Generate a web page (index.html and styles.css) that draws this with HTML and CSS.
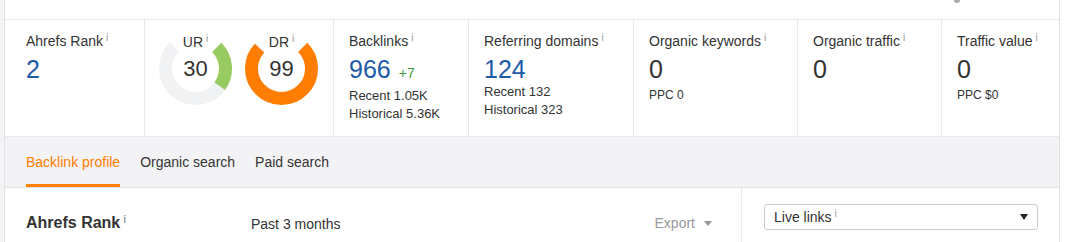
FILE: index.html
```html
<!DOCTYPE html>
<html lang="en">
<head>
  <meta charset="UTF-8" />
  <meta name="viewport" content="width=device-width, initial-scale=1.0"/>
  <title>Site Explorer - Overview</title>
  <link rel="stylesheet" href="styles.css">
</head>
<body>
<div class="page">
  <div class="gutter"></div>
  <div class="main">
    <div class="topbar"><span class="top-mark"></span></div>

    <div class="stats">
      <div class="cell first">
        <div class="label">Ahrefs Rank<span class="info">i</span></div>
        <div class="num">2</div>
      </div>
      <div class="cell gauges">
        <div class="gauge">
          <svg viewBox="0 0 73 73" width="73" height="73">
            <circle class="track" cx="36.5" cy="36.5" r="30" stroke-dasharray="141.4 188.5" transform="rotate(-45 36.5 36.5)"/>
            <circle class="ur-arc" cx="36.5" cy="36.5" r="30" stroke-dasharray="42.4 188.5" transform="rotate(-45 36.5 36.5)"/>
          </svg>
          <div class="gauge-label">UR<span class="info">i</span></div>
          <div class="gauge-num">30</div>
        </div>
        <div class="gauge">
          <svg viewBox="0 0 73 73" width="73" height="73">
            <circle class="track" cx="36.5" cy="36.5" r="30" stroke-dasharray="141.4 188.5" transform="rotate(-45 36.5 36.5)"/>
            <circle class="dr-arc" cx="36.5" cy="36.5" r="30" stroke-dasharray="140 188.5" transform="rotate(-45 36.5 36.5)"/>
          </svg>
          <div class="gauge-label">DR<span class="info">i</span></div>
          <div class="gauge-num">99</div>
        </div>
      </div>
      <div class="cell c3">
        <div class="label">Backlinks<span class="info">i</span></div>
        <div class="num">966<span class="delta">+7</span></div>
        <div class="sub">Recent 1.05K</div>
        <div class="sub">Historical 5.36K</div>
      </div>
      <div class="cell c4">
        <div class="label">Referring domains<span class="info">i</span></div>
        <div class="num">124</div>
        <div class="sub">Recent 132</div>
        <div class="sub">Historical 323</div>
      </div>
      <div class="cell c5">
        <div class="label">Organic keywords<span class="info">i</span></div>
        <div class="num plain">0</div>
        <div class="sub small">PPC 0</div>
      </div>
      <div class="cell c6">
        <div class="label">Organic traffic<span class="info">i</span></div>
        <div class="num plain">0</div>
      </div>
      <div class="cell c7">
        <div class="label">Traffic value<span class="info">i</span></div>
        <div class="num plain">0</div>
        <div class="sub small">PPC $0</div>
      </div>
    </div>

    <div class="tabs">
      <div class="tab active">Backlink profile</div>
      <div class="tab">Organic search</div>
      <div class="tab">Paid search</div>
    </div>

    <div class="section">
      <div class="section-left">
        <div class="section-title">Ahrefs Rank<span class="info">i</span></div>
        <div class="period">Past 3 months</div>
        <div class="export">Export <span class="caret gray"></span></div>
      </div>
      <div class="section-right">
        <div class="select">
          <span>Live links<span class="info">i</span></span>
          <span class="caret"></span>
        </div>
      </div>
    </div>
  </div>
</div>
</body>
</html>
```

FILE: styles.css
```css
body {
  margin: 0;
  padding: 0;
  font-family: "Liberation Sans", Arial, sans-serif;
  color: #333;
  background: #fff;
}
.page {
  display: flex;
  height: 242px;
  overflow: hidden;
}
.gutter {
  width: 4px;
  background: #f4f4f6;
  border-right: 1px solid #e3e3e6;
}
.main {
  width: 1054px;
  border-right: 1px solid #e3e3e6;
}
.topbar {
  height: 19px;
  border-bottom: 1px solid #e8e8ea;
  display: flex;
  justify-content: flex-end;
  padding-right: 99px;
}
.top-mark {
  width: 6px;
  height: 3px;
  background: #aaa;
  border-radius: 0 0 3px 3px;
}
.stats {
  display: flex;
  height: 116px;
  border-bottom: 1px solid #e8e8ea;
}
.cell {
  box-sizing: border-box;
  border-right: 1px solid #e8e8ea;
  padding: 13px 0 0 15px;
}
.cell.first { width: 140px; padding-left: 21px; }
.cell.gauges { width: 189px; }
.cell.c3 { width: 135px; }
.cell.c4 { width: 165px; }
.cell.c5 { width: 164px; }
.cell.c6 { width: 144px; }
.cell.c7 { width: 117px; border-right: none; }

.label {
  font-size: 14px;
  line-height: 16px;
  margin-bottom: 4px;
  white-space: nowrap;
}
.info {
  font-size: 10px;
  color: #999;
  margin-left: 3px;
  position: relative;
  top: -5px;
}
.num {
  font-size: 25px;
  line-height: 28px;
  color: #1d5aa8;
  margin-bottom: 0;
}
.num.plain {
  color: #333;
}
.delta {
  font-size: 14px;
  color: #3c9a3c;
  margin-left: 8px;
}
.sub {
  font-size: 13px;
  line-height: 18px;
}
.sub.small {
  font-size: 12px;
  padding-top: 3px;
}

.gauges {
  display: flex;
  gap: 13px;
  padding: 12px 0 0 14px;
}
.gauge {
  position: relative;
  width: 73px;
  height: 73px;
}
.gauge svg {
  display: block;
}
.gauge circle {
  fill: none;
  stroke-width: 13;
}
.track { stroke: #f1f2f4; }
.ur-arc { stroke: #97cb62; }
.dr-arc { stroke: #ff7d00; }
.gauge-label {
  position: absolute;
  top: 2px;
  left: 0;
  right: 0;
  text-align: center;
  font-size: 14px;
  line-height: 16px;
}
.gauge-num {
  position: absolute;
  inset: 0;
  display: flex;
  align-items: center;
  justify-content: center;
  font-size: 22px;
  line-height: 1;
}

.tabs {
  display: flex;
  gap: 20px;
  height: 50px;
  padding-left: 21px;
  background: #f3f3f5;
  border-bottom: 1px solid #e3e3e6;
}
.tab {
  box-sizing: border-box;
  height: 50px;
  padding-top: 17px;
  font-size: 14px;
  line-height: 16px;
  border-bottom: 3px solid transparent;
}
.tab.active {
  color: #ff7d00;
  border-bottom-color: #ff8000;
}

.section {
  display: flex;
  height: 60px;
}
.section-left {
  box-sizing: border-box;
  width: 737px;
  border-right: 1px solid #e8e8ea;
  display: flex;
  align-items: flex-start;
  padding: 25px 29px 0 21px;
}
.section-title {
  font-size: 16px;
  font-weight: bold;
  line-height: 18px;
  width: 225px;
  padding-top: 1px;
}
.period {
  font-size: 14px;
  line-height: 18px;
  padding-top: 2px;
}
.export {
  margin-left: auto;
  font-size: 14px;
  line-height: 18px;
  padding-top: 1px;
  color: #999;
  display: flex;
  align-items: center;
  gap: 9px;
}
.section-right {
  padding: 16px 21px 0 22px;
}
.select {
  box-sizing: border-box;
  width: 274px;
  height: 26px;
  border: 1px solid #ccc;
  border-radius: 3px;
  display: flex;
  align-items: center;
  justify-content: space-between;
  padding: 0 9px 0 9px;
  font-size: 14px;
}
.caret {
  width: 0;
  height: 0;
  border-left: 4px solid transparent;
  border-right: 4px solid transparent;
  border-top: 6px solid #222;
}
.caret.gray {
  border-top-color: #999;
  border-top-width: 5px;
}
```
